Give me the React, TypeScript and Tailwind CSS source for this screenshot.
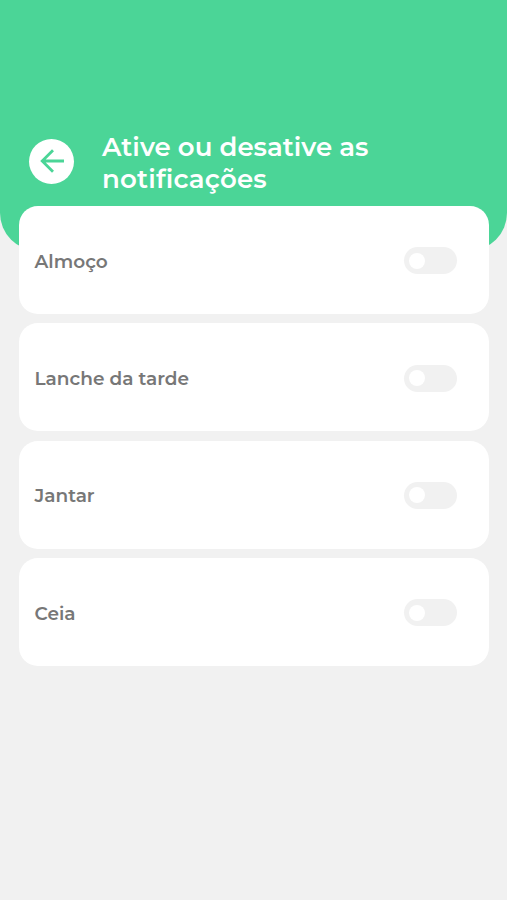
import { useState } from 'react';

const MEALS = [
  { id: 'lunch', label: 'Almoço' },
  { id: 'snack', label: 'Lanche da tarde' },
  { id: 'dinner', label: 'Jantar' },
  { id: 'supper', label: 'Ceia' },
];

function BackIcon() {
  return (
    <svg width="24" height="24" viewBox="0 0 24 24" fill="none" stroke="#4bd597" strokeWidth="2.8">
      <path d="M24 12H2.2M13 1.2L2.2 12L13 22.8" />
    </svg>
  );
}

function Toggle({ label, checked, onChange }: { label: string; checked: boolean; onChange: () => void }) {
  return (
    <button
      type="button"
      role="switch"
      aria-label={label}
      aria-checked={checked}
      onClick={onChange}
      className={`mt-[1.5px] flex h-[27px] w-[53px] items-center rounded-full px-[5px] ${
        checked ? 'justify-end bg-[#4bd597]' : 'justify-start bg-[#f1f1f1]'
      }`}
    >
      <span className="size-4 rounded-full bg-white" />
    </button>
  );
}

export default function App() {
  const [enabled, setEnabled] = useState<Record<string, boolean>>({});

  const toggle = (id: string) => setEnabled((prev) => ({ ...prev, [id]: !prev[id] }));

  return (
    <div className="h-[900px] w-full overflow-hidden bg-[#f1f1f1] font-['Montserrat',Inter,sans-serif]">
      <header className="flex h-[251px] items-start rounded-b-[38px] bg-[#4bd597] pt-[132px] pl-[29px]">
        <button
          type="button"
          aria-label="Voltar"
          className="mt-[6.5px] flex size-[45px] shrink-0 items-center justify-center rounded-full bg-white"
        >
          <BackIcon />
        </button>
        <h1 className="ml-7 text-[26px] leading-[31.5px] font-semibold text-white">
          <span className="block whitespace-nowrap">Ative ou desative as</span>
          <span className="block whitespace-nowrap tracking-[0.2px]">notificações</span>
        </h1>
      </header>

      {/* Cards overlap the bottom of the header */}
      <main className="relative -mt-[45px] flex flex-col gap-[9.3px] pr-[18px] pl-[19px]">
        {MEALS.map((meal) => (
          <section
            key={meal.id}
            className="flex h-[108px] items-center justify-between rounded-[19px] bg-white pr-8 pl-[15.5px]"
          >
            <span className="pt-[3px] text-[18.5px] font-semibold text-[#777777]">{meal.label}</span>
            <Toggle label={meal.label} checked={!!enabled[meal.id]} onChange={() => toggle(meal.id)} />
          </section>
        ))}
      </main>
    </div>
  );
}
